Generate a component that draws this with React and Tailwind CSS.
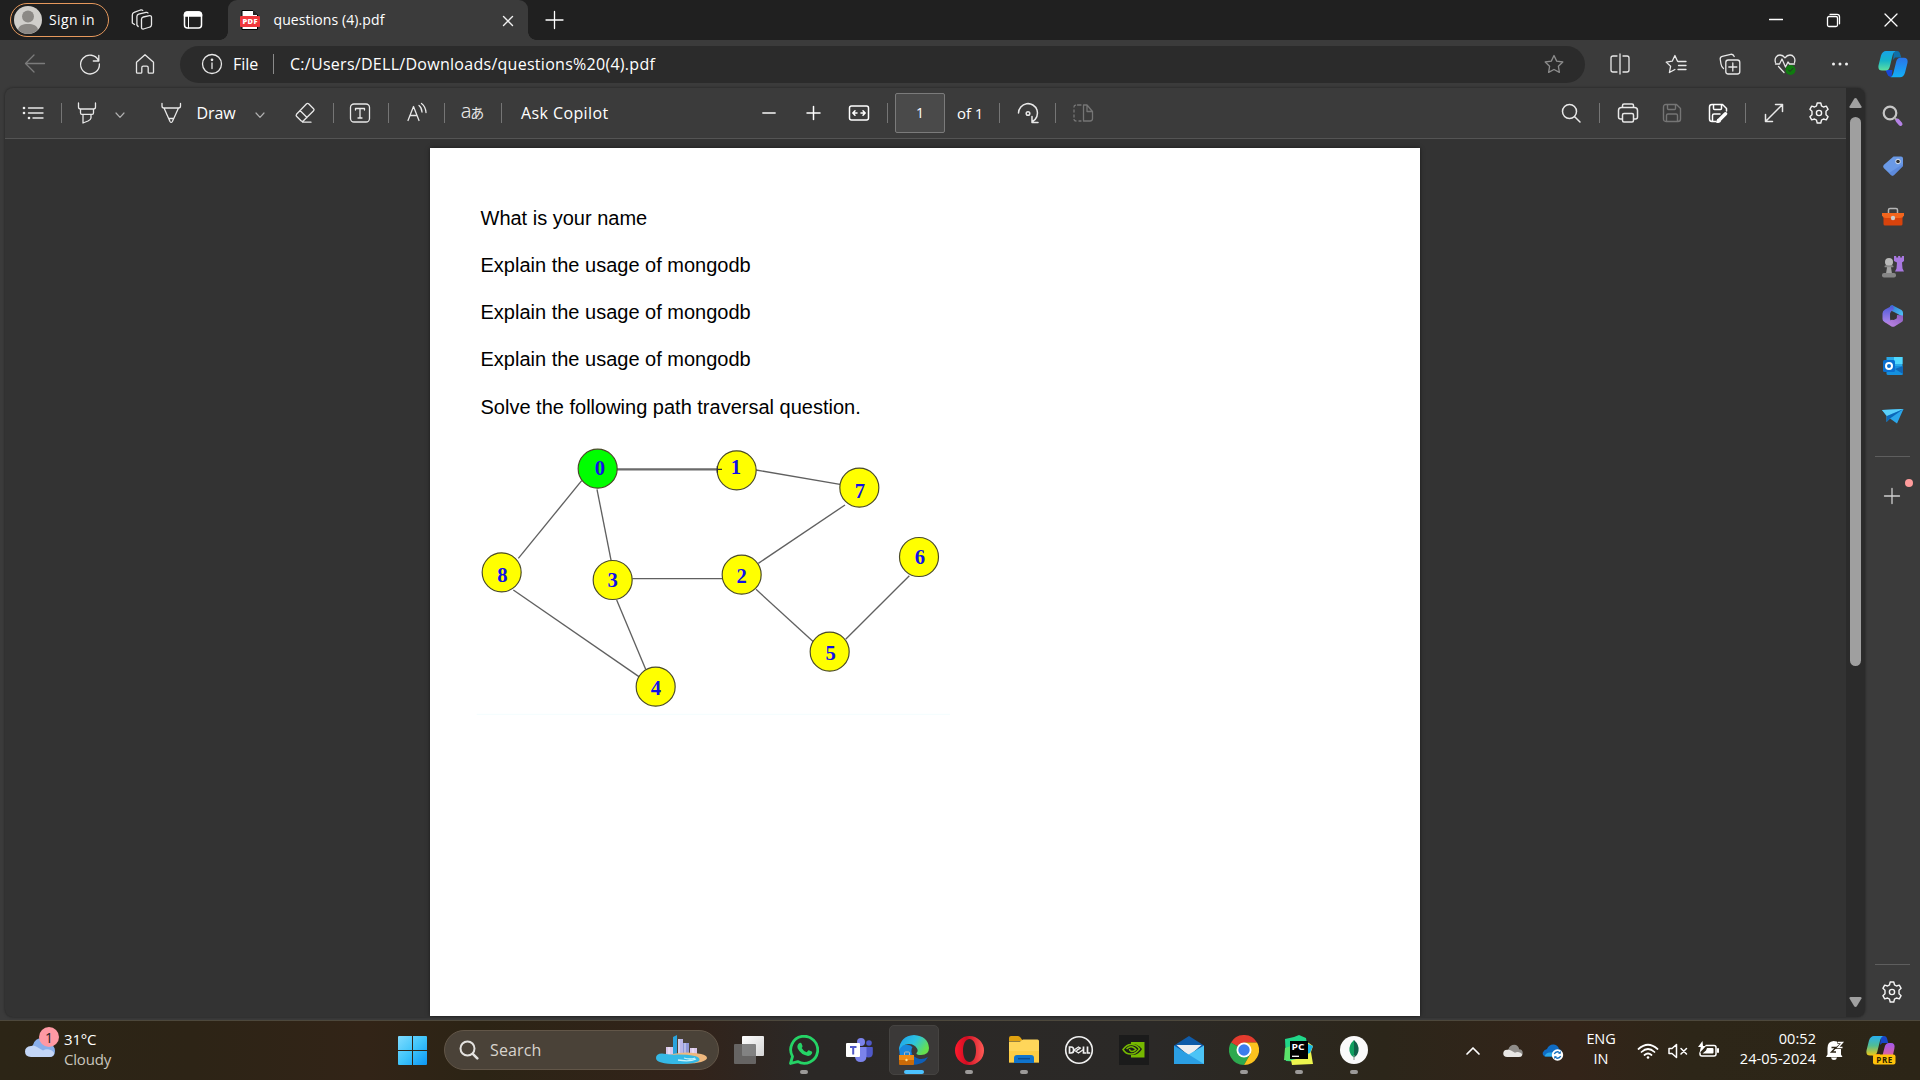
import React from "react";

const UI = "font-['Open_Sans','Noto_Sans',sans-serif]";

function I({ w = 24, h = 24, sw = 1.3, c = "#e8e8e8", children, className = "" }) {
  return (
    <svg width={w} height={h} viewBox={`0 0 ${w} ${h}`} fill="none" stroke={c} strokeWidth={sw} strokeLinecap="round" strokeLinejoin="round" className={"shrink-0 " + className}>
      {children}
    </svg>
  );
}

function Slot({ w, children, className = "" }) {
  return <div className={`flex h-full shrink-0 items-center justify-center ${w} ${className}`}>{children}</div>;
}

function Divider({ w }) {
  return (
    <Slot w={w}>
      <div className="h-5 w-px bg-[#757575]" />
    </Slot>
  );
}

const Chevron = () => (
  <I w={12} h={12} c="#b0b0b0" sw={1.2} className="mt-1"><path d="M2 4l4 4.3L10 4" /></I>
);

const GEAR = "M10.2 2h3.6l.7 2.9 1.9 1.1 2.9-.9 1.8 3.2-2.1 2v3.4l2.1 2-1.8 3.2-2.9-.9-1.9 1.1-.7 2.9h-3.6l-.7-2.9L7.600 18l-2.900.9-1.800-3.200 2.100-2v-3.400l-2.100-2 1.800-3.200 2.900.9 1.900-1.100z";
const Gear = () => (
  <I sw={1.4} c="#f5f5f5"><path d={GEAR} /><circle cx="12" cy="12" r="2.6" /></I>
);

const STAR = "M11 2.500l2.700 5.600 6.100.9-4.400 4.300 1 6.100-5.400-2.900-5.400 2.900 1-6.100L2.200 9l6.100-.9z";

function TitleBar() {
  return (
    <div className="flex h-10 shrink-0 items-center bg-[#202020] text-white">
      <div className="ml-2.5 flex h-[34px] w-[99px] items-center rounded-full border-[1.5px] border-[#e5985c] pl-[3px]">
        <svg width="28" height="28" viewBox="0 0 28 28">
          <circle cx="14" cy="14" r="14" fill="#d0cecb" />
          <circle cx="14" cy="10.500" r="6" fill="#8b8885" />
          <path d="M4 23.500c1-4 4.500-5.500 10-5.500s9 1.500 10 5.500A14 14 0 0 1 14 28 14 14 0 0 1 4 23.500z" fill="#8b8885" />
        </svg>
        <span className="ml-[7px] pb-px text-[14px] tracking-[0.4px] whitespace-nowrap">Sign in</span>
      </div>
      <Slot w="w-[65px]">
        <I w={22} h={22}>
          <path d="M10.500 10q.2-1.600 1.800-2L18.600 6.600q1.900-.2 1.900 1.600v7.600q0 1.800-1.500 2.200L12.500 20q-2 .3-2-1.600z" />
          <path d="M7.200 17.500L5.900 16V7.600q0-2 1.800-2.500L15 3.400q1.500-.2 2 .6" />
          <path d="M3.500 15.500L1.300 14V6Q1.300 4 3.100 3.400L9.500 1q1.500-.3 2.200.4" />
        </I>
      </Slot>
      <Slot w="w-[38px]">
        <I w={20} h={20} sw={1.5} c="#fff">
          <rect x="1.500" y="2" width="17" height="16" rx="3" />
          <path d="M1.500 6V4.500Q2 2 4.500 2h11q2.500 0 3 2.500V6z" fill="#fff" />
          <path d="M5.500 6v12" strokeWidth="1" />
        </I>
      </Slot>
      <div className="relative ml-4 flex h-10 w-[300px] items-center rounded-t-[9px] bg-[#3b3b3b] before:absolute before:bottom-0 before:-left-2 before:size-2 before:bg-[radial-gradient(circle_at_0_0,transparent_7.5px,#3b3b3b_8px)] after:absolute after:-right-2 after:bottom-0 after:size-2 after:bg-[radial-gradient(circle_at_100%_0,transparent_7.5px,#3b3b3b_8px)]">
        <svg width="20" height="20" viewBox="0 0 20 20" className="ml-3">
          <path d="M2 .5h11L17.500 5v14.500H2z" fill="#fff" stroke="#000" />
          <path d="M13 .5V5h4.500z" fill="#222" />
          <rect x="0" y="6" width="20" height="11" rx="1" fill="#f0383c" />
          <text x="10" y="14.300" fontSize="7.500" fontWeight="800" fill="#fff" textAnchor="middle" fontFamily="Open Sans" textLength="15">PDF</text>
        </svg>
        <span className="ml-[13.5px] pb-px text-[14px] tracking-[0.1px] whitespace-nowrap">questions (4).pdf</span>
        <Slot w="w-10" className="ml-auto">
          <I w={14} h={14} sw={1.4} c="#f0f0f0" className="mt-px"><path d="M2.500 2.500l9 9M11.500 2.500l-9 9" /></I>
        </Slot>
      </div>
      <Slot w="w-[52px]">
        <I w={20} h={20} c="#fff"><path d="M10.500 1.500v17M2 10h17" /></I>
      </Slot>
      <Slot w="w-14" className="ml-auto"><I w={14} h={14} c="#fff"><path d="M.5 6.500h13" /></I></Slot>
      <Slot w="w-[58px]">
        <I w={15} h={15} c="#fff"><rect x="1.500" y="3.500" width="10" height="10" rx="1.500" /><path d="M4 1.300h7q2.500 0 2.500 2.500v7" /></I>
      </Slot>
      <Slot w="w-[58px]"><I w={14} h={14} c="#fff"><path d="M1 1l12 12M13 1L1 13" /></I></Slot>
    </div>
  );
}

function NavBar() {
  return (
    <div className="flex h-12 shrink-0 items-center text-white">
      <Slot w="w-[70px]"><I c="#7b7b7b"><path d="M21.500 11.500H2.500M11 3L2.500 11.500 11 20" /></I></Slot>
      <Slot w="w-10">
        <I><path d="M20.500 8.500A9.400 9.400 0 1 0 21.400 12M20.800 3.500v5.500h-5.500" /></I>
      </Slot>
      <Slot w="w-[70px]">
        <I><path d="M3.500 10.200L12 2.700l8.500 7.500v10q0 1-1 1h-3.300q-1 0-1-1v-4.500q0-1.500-1.500-1.500h-3.400q-1.500 0-1.500 1.500v4.500q0 1-1 1H4.500q-1 0-1-1z" /></I>
      </Slot>
      <div className="flex h-[37px] w-[1405px] items-center rounded-full bg-[#2b2b2b]">
        <Slot w="w-6" className="ml-5">
          <I w={22} h={22}><circle cx="11" cy="11" r="9.500" /><path d="M11 10v5.500" /><circle cx="11" cy="6.800" r=".7" fill="#fff" /></I>
        </Slot>
        <span className="ml-[9px] w-10 text-[16px]">File</span>
        <div className="h-5 w-px bg-[#8a8a8a]" />
        <span className="ml-4 text-[16px] tracking-[0.28px] whitespace-nowrap">C:/Users/DELL/Downloads/questions%20(4).pdf</span>
        <Slot w="w-[62px]" className="ml-auto"><I w={22} h={22} c="#8d8d8d"><path d={STAR} /></I></Slot>
      </div>
      <Slot w="w-[69px]">
        <I w={22} h={22}><path d="M8 3H4Q2 3 2 5v12q0 2 2 2h4M14 3h4q2 0 2 2v12q0 2-2 2h-4M11 1v20" /></I>
      </Slot>
      <Slot w="w-[43px]">
        <I w={22} h={22}><path d="M12.500 8.200L9.900 2.500 7.200 8.200l-6 .9 4.400 4.200-1.200 6.200 5.500-3M13 8.500h8M13.500 12.500h7.500M13 16.500h8" /></I>
      </Slot>
      <Slot w="w-[66px]">
        <I w={22} h={22}><rect x="6.800" y="7" width="14" height="14" rx="2.500" /><path d="M13.800 10v8M9.800 14h8M4.500 15.500Q2.500 14 2 11L1.200 6q-.2-2.200 2-2.700l8.500-2q2.500-.5 3.500 2.200" /></I>
      </Slot>
      <Slot w="w-11">
        <I w={22} h={22}>
          <path d="M1.500 9.500C0 5 3 2 6 2q3 0 5 2.800Q13 2 16 2c3 0 6 3 4.500 7.500M1.500 11h4l2.500-5 3.500 8 2.500-5 1.500 2h5M4.500 13.500l5.500 6" />
          <circle cx="16.500" cy="17" r="5" fill="#0f7b0f" stroke="none" />
          <path d="M14.500 17l1.500 1.500 2.800-3" stroke="#2b2b2b" strokeWidth="1" />
        </I>
      </Slot>
      <Slot w="w-[66px]">
        <I w={18} h={6}><g fill="#f0f0f0" stroke="none"><circle cx="2.500" cy="3" r="1.500" /><circle cx="9" cy="3" r="1.500" /><circle cx="15.500" cy="3" r="1.500" /></g></I>
      </Slot>
      <Slot w="w-10">
        <svg width="30" height="28" viewBox="0 0 30 28">
          <defs>
            <linearGradient id="cpA" x1="0" y1="0" x2="0" y2="1"><stop offset="0" stopColor="#16a3e8" /><stop offset=".5" stopColor="#16b4c8" /><stop offset="1" stopColor="#5ee0a0" /></linearGradient>
            <linearGradient id="cpB" x1="0" y1="0" x2="0" y2="1"><stop offset="0" stopColor="#2a74e8" /><stop offset="1" stopColor="#12b0f8" /></linearGradient>
          </defs>
          <path d="M16 1h3q2.500 0 3.200 3l1 3.500h-6L15 10z" fill="#0e6fa8" />
          <path d="M7.500 20h7l-1 7q-3 .5-4.300-3z" fill="#1748d8" />
          <path d="M8 1h9.500q-2 1-2.800 4l-3 12q-1 3.500-4 3.500H4Q-.5 20.500.6 15L3 5.500Q4.500 1 8 1z" fill="url(#cpA)" />
          <path d="M22 27.300h-9.500q2-1 2.800-4l3-12q1-3.500 4-3.500H26q4.500 0 3.400 5.500L27 22.800q-1.500 4.500-5 4.500z" fill="url(#cpB)" />
        </svg>
      </Slot>
    </div>
  );
}

function PdfToolbar() {
  return (
    <div className="flex h-[50.5px] shrink-0 items-center border-b border-[#545454] bg-[#3b3b3b] text-[16px] text-white">
      <Slot w="w-[55px]">
        <I w={22} h={18} sw={1.4}><path d="M6.500 4H21M6.500 9H21M11 14H21" /><g fill="#eee" stroke="none"><circle cx="2" cy="4" r="1.300" /><circle cx="2" cy="9" r="1.300" /><circle cx="7" cy="14" r="1.300" /></g></I>
      </Slot>
      <Divider w="w-0.5" />
      <Slot w="w-[50px]">
        <I><path d="M3.500 2v4q0 2 2 2h13q2 0 2-2V2M5.500 8v4q0 1.300 1.300 1.300h10.400q1.300 0 1.300-1.300V8M8 13.300V22l5-2q3-1.500 3-3v-3.700" /></I>
      </Slot>
      <Slot w="w-4"><Chevron /></Slot>
      <Slot w="w-8" className="ml-[27px]">
        <I><path d="M3 2.500V5q0 2 2 2h14.500q2 0 2-2V2.500M5 7l6 13.500q1.200 1.800 2.400 0L19.500 7M9.700 17.500h5" /></I>
      </Slot>
      <span className="ml-[9.5px] w-[53.5px] tracking-[-0.1px]">Draw</span>
      <Slot w="w-5"><Chevron /></Slot>
      <Slot w="w-10" className="ml-[15px]">
        <I><path d="M13.600 2.800q1-.9 2 0l5 5q1 1 0 2L10.500 19.800q-1.500 1-2.500 0L3.500 15.300q-.8-1 0-2zM7 9.500l7 7M9.500 21.200H18" /></I>
      </Slot>
      <Divider w="w-4" />
      <Slot w="w-[38px]">
        <I w={22} h={22}><rect x="1.500" y="2" width="19" height="18" rx="3.500" /><path d="M6.500 8V6.500h9V8M11 6.500v9.500M9 16h4" /></I>
      </Slot>
      <Divider w="w-[18px]" />
      <Slot w="w-10">
        <I w={22} h={22}><path d="M2 18.500L7.500 4.500l5.500 14M4 13.500h7M13 3.500q2.700 2 3 6.500M15.500 1.500q4 3 4.500 9" /></I>
      </Slot>
      <Divider w="w-[15px]" />
      <Slot w="w-10">
        <span className="pb-1 font-['Noto_Sans','Noto_Sans_CJK_JP',sans-serif] text-[20px] leading-none font-light tracking-[-1px] text-[#e8e8e8]">a<span className="text-[14px] font-normal">あ</span></span>
      </Slot>
      <Divider w="w-[18px]" />
      <span className="ml-[11px] w-[99px] tracking-[0.4px] whitespace-nowrap">Ask Copilot</span>
      <Slot w="w-[30px]" className="ml-[134px]"><I w={16} h={6} sw={1.8} c="#c8c8c8"><path d="M2 3h12" /></I></Slot>
      <Slot w="w-[30px]" className="ml-3.5"><I w={16} h={16} sw={1.5} c="#fff"><path d="M8.500 1.500v13M2 8h13" /></I></Slot>
      <Slot w="w-10" className="ml-[11px]">
        <I w={22} h={18} sw={1.5} c="#fff"><rect x="1.500" y="2" width="19" height="14" rx="2" /><path d="M5 9h4M7 6.800L4.800 9 7 11.200M17 9h-4M15 6.800L17.200 9 15 11.200" /></I>
      </Slot>
      <Divider w="w-4" />
      <div className="flex h-10 w-[50px] items-center justify-center rounded-[2px] border border-[#7b7b7b] bg-[#4a4a4a] text-[14px]">1</div>
      <span className="ml-3 w-[27px] text-[15px] tracking-[-0.1px] whitespace-nowrap">of 1</span>
      <Divider w="w-[30px]" />
      <Slot w="w-[27px]">
        <I sw={1.5}><path d="M2.500 12A9.500 9.500 0 1 1 16.500 20.500M16 15.500v6h6" /><circle cx="12" cy="12.500" r="1.800" /></I>
      </Slot>
      <Divider w="w-[29px]" />
      <Slot w="w-[26px]">
        <I w={22} h={20} c="#757575"><path d="M9 2H5.500M3.500 2.200Q2 2.500 2 4M2 7v2M2 12v2M2 16.500q.5 1.500 2 1.500M7 18h2M11.500 2v16H18q2.500 0 2.500-2.500V8.500L15 2zM15 2v6.500h5.500" /></I>
      </Slot>
      <Slot w="w-9" className="ml-auto"><I w={22} h={22} sw={1.5}><circle cx="9.500" cy="9.500" r="7" /><path d="M14.700 14.700L20 20" /></I></Slot>
      <Divider w="w-[21px]" />
      <Slot w="w-[35px]">
        <I w={22} h={22} sw={1.5}><path d="M5.500 5V3.500q0-1.500 1.500-1.500h8q1.500 0 1.500 1.500V5M5 17H3.500Q1.500 17 1.500 15V8.500Q1.500 5.500 4.500 5.500h13q3 0 3 3V15q0 2-2 2H17" /><rect x="5.500" y="11.500" width="11" height="8.500" rx="1.500" /></I>
      </Slot>
      <Slot w="w-[34px]" className="ml-2.5">
        <I w={20} h={20} sw={1.4} c="#757575"><path d="M4 1.500h10.500l4 4V16q0 2.500-2.500 2.500H4Q1.500 18.500 1.500 16V4Q1.500 1.500 4 1.500zM5.500 1.500v4q0 1 1 1h6q1 0 1-1v-4M4.500 18.500v-6q0-1.500 1.500-1.500h8q1.500 0 1.500 1.500v6" /></I>
      </Slot>
      <Slot w="w-[34px]" className="ml-3">
        <I w={20} h={20} sw={1.5} c="#fff"><path d="M8 18.500H4Q1.500 18.500 1.500 16V4Q1.500 1.500 4 1.500h10.500l4 4V8M5.500 1.500v4q0 1 1 1h6q1 0 1-1v-4M4.500 18.500v-6q0-1.500 1.500-1.500h6" /><path d="M10.500 17.800l7-7" strokeWidth="3.500" /><path d="M9 19.500l1-3 2 2z" fill="#fff" /></I>
      </Slot>
      <Divider w="w-[21px]" />
      <Slot w="w-[35px]"><I w={20} h={20} sw={1.5}><path d="M11.500 1.500h7v7M18.500 1.500l-17 17M1.500 11.500v7h7" /></I></Slot>
      <Slot w="w-[55px]"><Gear /></Slot>
    </div>
  );
}

const NODES = [
  [413, 116, "0", 420, 136], [830, 121, "1", 828, 132], [1198, 173, "7", 1200, 205],
  [125, 427, "8", 127, 456], [458, 450, "3", 458, 470], [845, 434, "2", 845, 460],
  [1377, 381, "6", 1380, 401], [1109, 665, "5", 1112, 689], [587, 770, "4", 588, 794],
];
const EDGES = [
  [888, 120, 1140, 163], [365, 152, 175, 385], [411, 178, 455, 400], [517, 446, 787, 446],
  [895, 400, 1155, 225], [888, 478, 1065, 640], [1157, 628, 1348, 437], [160, 480, 540, 742], [470, 510, 557, 718],
];

function Graph() {
  return (
    <svg width="500" height="290" viewBox="0 0 1500 870" className="-mt-px ml-[30px] shrink-0">
      <path d="M50 853H1470" stroke="#f3fdfe" strokeWidth="3" />
      <path d="M470 118H785" stroke="#6a6a6a" strokeWidth="7" />
      {EDGES.map(([a, b, c, d]) => <line key={`${a}-${b}`} x1={a} y1={b} x2={c} y2={d} stroke="#606060" strokeWidth="4" />)}
      {NODES.map(([x, y, t, tx, ty]) => (
        <g key={t}>
          <circle cx={x} cy={y} r="58.500" fill={t === "0" ? "#00ff00" : "#ffff00"} stroke="#4a4a28" strokeWidth="3.500" />
          <text x={tx} y={ty} fontSize="62" fontWeight="700" fontFamily="Liberation Serif" fill="#1010e8" textAnchor="middle">{t}</text>
        </g>
      ))}
      <path d="M772 108v20M772 118h14" stroke="#333" strokeWidth="4" />
    </svg>
  );
}

function PdfView() {
  return (
    <div className="ml-[5px] flex h-[929px] w-[1860px] overflow-hidden rounded-lg bg-[#333] shadow-[0_0_3px_rgba(0,0,0,.45)]">
      <div className="flex w-[1841px] flex-col">
        <PdfToolbar />
        <div className="mt-[9.5px] ml-[425px] flex min-h-0 w-[990px] flex-1 flex-col overflow-hidden bg-white pt-[47px] font-['Liberation_Sans',sans-serif] text-[20px] leading-[47px] text-black shadow-[0_0_4px_rgba(0,0,0,.5)] mb-px">
          <p className="ml-[50.5px]">What is your name</p>
          <p className="ml-[50.5px]">Explain the usage of mongodb</p>
          <p className="ml-[50.5px]">Explain the usage of mongodb</p>
          <p className="ml-[50.5px]">Explain the usage of mongodb</p>
          <p className="ml-[50.5px] pt-px">Solve the following path traversal question.</p>
          <Graph />
        </div>
      </div>
      <div className="flex w-[19px] flex-col items-center bg-[#2b2b2b]">
        <svg width="13" height="10" viewBox="0 0 13 10" className="mt-2.5"><path d="M6.500 0q.8 0 1.300.8l4.700 7.700q.5 1.500-1 1.500h-10Q0 10 .5 8.500L5.200.8Q5.700 0 6.500 0z" fill="#a0a0a0" /></svg>
        <div className="mt-[9px] h-[549px] w-[11px] rounded-full bg-[#9f9f9f]" />
        <svg width="13" height="10" viewBox="0 0 13 10" className="mt-auto mb-2.5"><path d="M6.500 10q-.8 0-1.300-.8L.5 1.500Q0 0 1.500 0h10q1.500 0 1 1.500L7.800 9.200q-.5.8-1.300.8z" fill="#a0a0a0" /></svg>
      </div>
    </div>
  );
}

function Sidebar() {
  return (
    <div className="flex w-[55px] flex-col items-center pt-[3px]">
      <Slot w="w-full" className="max-h-[50px] min-h-[50px]">
        <svg width="22" height="22" viewBox="0 0 22 22"><circle cx="8" cy="8" r="6.300" fill="none" stroke="#c6c6c6" strokeWidth="2.200" /><path d="M12.500 12.700l2.500 2.500" stroke="#aaa" strokeWidth="2" /><path d="M15.500 15.500l3 3.500" stroke="#b582e6" strokeWidth="4" strokeLinecap="round" /></svg>
      </Slot>
      <Slot w="w-full" className="max-h-[50px] min-h-[50px]">
        <svg width="22" height="22" viewBox="0 0 22 22"><path d="M11.500 1.500h7.500q2 0 2 2V11l-9 9q-1.500 1.500-3 0L1.700 13q-1.200-1.500 0-3z" fill="#6a99e6" /><path d="M21 9v2l-9 9q-1.500 1.500-3 0l-2-2z" fill="#5580d6" opacity=".6" /><circle cx="16" cy="6.500" r="2.300" fill="#333" stroke="#dde6f4" /></svg>
      </Slot>
      <Slot w="w-full" className="max-h-[50px] min-h-[50px]">
        <svg width="22" height="20" viewBox="0 0 22 20" className="mt-0.5"><path d="M6.500 6V3q0-1.500 1.500-1.500h6q1.500 0 1.500 1.500v3" fill="none" stroke="#b5b5b5" strokeWidth="1.500" /><path d="M1.500 9h19v8q0 1.500-1.500 1.500H3q-1.500 0-1.500-1.500z" fill="#d8430c" /><path d="M0 6h22v2.500Q21 11 18 11H4Q1 11 0 8.500z" fill="#f2651d" /><circle cx="11" cy="11" r="2.200" fill="#ccc" /></svg>
      </Slot>
      <Slot w="w-full" className="max-h-[50px] min-h-[50px]">
        <svg width="22" height="23" viewBox="0 0 22 23"><path d="M12 1h2.200v1.500h1.900V1h2.100v1.500h1.700V1H22v5l-2 1.500.5 6 1.500 3h-9l1.500-3 .5-6-3-1.500z" fill="#a878e0" /><circle cx="7" cy="7" r="4" fill="#b9b9b9" /><path d="M3.500 10.500h7l-1.500 2 1 6H4l1-6z" fill="#a3a3a3" /><rect x="0" y="18" width="14" height="4.500" rx="2" fill="#858585" /><rect x="2.500" y="10.500" width="9" height="1.800" rx=".9" fill="#8a8a8a" /></svg>
      </Slot>
      <Slot w="w-full" className="max-h-[50px] min-h-[50px]">
        <svg width="22" height="22" viewBox="0 0 22 22">
          <defs>
            <linearGradient id="mA" x1="0" y1="0" x2="1" y2="1"><stop offset="0" stopColor="#2a78d0" /><stop offset="1" stopColor="#52c8f8" /></linearGradient>
            <linearGradient id="mB" x1="0" y1="0" x2="0" y2="1"><stop offset="0" stopColor="#4a58d8" /><stop offset="1" stopColor="#a884ea" /></linearGradient>
            <linearGradient id="mC" x1="0" y1="1" x2="1" y2="0"><stop offset="0" stopColor="#c28ae8" /><stop offset="1" stopColor="#8a5cc0" /></linearGradient>
          </defs>
          <path d="M10 0l9.500 5q1.500 1 1.500 3v4l-6-3.500L8 5V1z" fill="url(#mA)" />
          <path d="M21 10.500V15q0 1.300-1.300 2L12.500 21.500q-1.500.7-3 0L2.500 17l6.500-2 5-1 1-4z" fill="url(#mC)" />
          <path d="M11 .3L3 4.500Q.5 6 .5 8.500V14q0 2 2 3 3 1 5.700-1V8.500Q8.200 7 9.500 6L12 4.500z" fill="url(#mB)" />
          <path d="M8.200 8.500L11 7l3.800 2.500v3.800L11.500 15l-3.300-1.500z" fill="#353535" />
        </svg>
      </Slot>
      <Slot w="w-full" className="max-h-[50px] min-h-[50px]">
        <svg width="22" height="20" viewBox="0 0 22 20"><path d="M4.500 1h16v10h-16z" fill="#28a8e8" /><path d="M12 1h8.500v7H12z" fill="#50d9ff" /><path d="M4.500 10H21v7.500q0 1.500-1.500 1.500H6q-1.500 0-1.500-1.500z" fill="#1490df" /><path d="M21 10v8L13 13z" fill="#1066b5" /><rect x="1" y="4" width="12" height="12" rx="1.500" fill="#0a6fd0" /><circle cx="7" cy="10" r="3" fill="none" stroke="#fff" strokeWidth="2" /></svg>
      </Slot>
      <Slot w="w-full" className="max-h-[50px] min-h-[50px]">
        <svg width="22" height="16" viewBox="0 0 22 16"><path d="M0 2L21.500 1 15 15.500 8 10.500 4.500 14V8z" fill="#2ba6ea" /><path d="M0 2L21.500 1 5 8z" fill="#5ad0fa" /><path d="M5 8L21 1.200 8 10.500 4.500 14z" fill="#0c67b8" /></svg>
      </Slot>
      <div className="mt-[15px] h-px w-[35px] shrink-0 bg-[#5e5e5e]" />
      <div className="relative mt-[30px] mr-0.5">
        <I w={18} h={18} c="#d0d0d0"><path d="M9 1.500v15M1.500 9h15" /></I>
        <div className="absolute -top-2 -right-3 size-2 rounded-full bg-[#ff9c9c]" />
      </div>
      <div className="mt-auto h-px w-[35px] shrink-0 bg-[#5e5e5e]" />
      <div className="mt-[15.5px] mb-4 mr-px"><Gear /></div>
    </div>
  );
}

function App55({ children, active, run }) {
  return (
    <div className="relative flex h-full w-[55px] items-center justify-center">
      <div className={`-mt-px flex size-[50px] items-center justify-center rounded-[5px] ${active ? "border border-[#454341] bg-[#3b3938]" : ""}`}>{children}</div>
      {run && <div className="absolute bottom-1.5 h-1 w-2 rounded-full bg-[#9c9a99]" />}
      {active && <div className="absolute bottom-1.5 h-1 w-5 rounded-full bg-[#4cc2ff]" />}
    </div>
  );
}

function CloudIcon({ w, h, a, b }) {
  return (
    <svg width={w} height={h} viewBox="0 0 30 20">
      <path d="M10 20Q4 18 5 11 8 8 8 8 10 1 17 1q6 0 7.500 7Q30 8 30 14q0 6-6 6z" fill={a} />
      <path d="M6 20q-6-.5-6-5.500T6 9q3-1 6 1l6 3.500q3-2 6-1 5.500 1.500 5 4.500-.5 3-5 3z" fill={b} />
    </svg>
  );
}

function Taskbar() {
  return (
    <div className="flex h-[60px] shrink-0 items-center border-t border-[#4d483c] bg-[linear-gradient(90deg,#2c2516_0%,#2d2416_10%,#322417_19%,#2c2415_25%,#32231a_36%,#2b2826_42%,#2b2927_60%,#2c261a_72%,#332419_82%,#2d2618_88%,#2c2517_100%)] text-white">
      <div className="relative ml-[25px] h-5 w-[30px] self-start mt-4">
        <CloudIcon w={30} h={20} a="#89aeea" b="#c3d6f7" />
        <div className="absolute -top-2.5 left-3.5 flex size-5 items-center justify-center rounded-full bg-[#ff99a4] text-[14px] text-[#222]">1</div>
      </div>
      <div className="mb-[3px] ml-[9px] w-[334px] text-[15px] leading-5 tracking-[-0.2px]"><div>31°C</div><div className="text-[#c9c5bd]">Cloudy</div></div>
      <svg width="29" height="29" viewBox="0 0 29 29" className="-mt-px">
        <defs><linearGradient id="win" x1="0" y1="0" x2="1" y2="1"><stop offset="0" stopColor="#80dcff" /><stop offset=".5" stopColor="#3fc4fa" /><stop offset="1" stopColor="#0c96f4" /></linearGradient></defs>
        <path d="M0 1q0-1 1-1h13v14H0zM15 0h13q1 0 1 1v13H15zM0 15h14v14H1q-1 0-1-1zM15 15h14v13q0 1-1 1H15z" fill="url(#win)" />
      </svg>
      <div className="-mt-px ml-[17px] flex h-10 w-[275px] items-center rounded-full border border-[#625648] bg-[#4a4238]">
        <I w={20} h={20} sw={2} c="#e4e2df" className="ml-3.5"><circle cx="8.500" cy="8.500" r="7" /><path d="M13.800 13.800l4.500 4.500" strokeWidth="2.600" /></I>
        <span className="ml-[11px] text-[16px] tracking-[0.15px] text-[#d8d4ce]">Search</span>
        <svg width="52" height="32" viewBox="0 0 52 32" className="mr-2.5 ml-auto">
          <path d="M10 13h7v10h-7zM34 14h7v9h-7z" fill="#d9c7ea" />
          <path d="M17 3l4-2v22h-4z" fill="#2aa3dc" /><path d="M22 5h5v18h-5z" fill="#b9b5e6" /><path d="M27 9h6v14h-6z" fill="#8f97d8" />
          <path d="M23 5v18M29 9v14M37 14v9M13 13v9" stroke="#fff" strokeWidth="1" opacity=".7" />
          <ellipse cx="31" cy="24" rx="20" ry="5.500" fill="#eeb87e" />
          <path d="M0 24q0-4.500 6-4.500 8 1.500 16 1 20 0 21.500 4.500 1 5-22 5Q0 30 0 24z" fill="#35b9e6" />
          <path d="M22 26q12 2 18-1M28 24q6 2 11 0" stroke="#c8f3fb" strokeWidth="1.300" fill="none" />
        </svg>
      </div>
      <div className="ml-[2.5px] flex h-full">
        <App55>
          <svg width="30" height="28" viewBox="0 0 30 28"><defs><linearGradient id="tv" x1="0" y1="0" x2="1" y2="1"><stop offset="0" stopColor="#fff" /><stop offset="1" stopColor="#d4d4d4" /></linearGradient></defs><rect x="8" y="0" width="22" height="20" rx="1" fill="url(#tv)" /><rect x="0" y="8" width="22" height="20" rx="1" fill="#707070" opacity=".85" /></svg>
        </App55>
        <App55 run>
          <svg width="30" height="30" viewBox="0 0 30 30"><path d="M1.500 28.500l2-7A13.500 13.500 0 1 1 8.700 26.600z" fill="none" stroke="#25d366" strokeWidth="2.800" strokeLinejoin="round" /><path d="M10.500 8q1.500-.7 2 .5l1 2.500q.2.800-.8 2 1.500 3 5 4.300l1.500-1.700q.5-.5 1.200-.2l2.400 1.200q.7.400.2 1.900-1 2.500-4 2.400Q12 20 8.700 13.500 7.500 10 10.500 8z" fill="#25d366" /></svg>
        </App55>
        <App55>
          <svg width="27" height="24" viewBox="0 0 27 24"><circle cx="15" cy="4" r="4" fill="#7b83eb" /><circle cx="23" cy="5" r="2.800" fill="#5059c9" /><path d="M18 9h8q.8 0 .8.800V15q0 4.500-4.500 4.500-3 0-4.300-2z" fill="#5059c9" /><path d="M9 9h11.500v9q0 6-6 6-5 0-5.500-5z" fill="#7b83eb" /><rect x="0" y="5" width="14" height="14" rx="1" fill="#fff" /><path d="M4 9h6.500M7.200 9v7.500" stroke="#5059c9" strokeWidth="2" /></svg>
        </App55>
        <App55 active>
          <svg width="30" height="30" viewBox="0 0 30 30">
            <defs><linearGradient id="edg" x1="0" y1="0" x2="1" y2=".5"><stop offset="0" stopColor="#1c9ff0" /><stop offset=".55" stopColor="#2dc3de" /><stop offset="1" stopColor="#66e04e" /></linearGradient></defs>
            <path d="M12 10.500Q4 9 .5 18 0 24 5 28.500q8 3 18-.5 4-2 6-6-5 3-10 1.500-6-2-6.500-7z" fill="#0e5fb8" />
            <path d="M.500 17Q-1 11 2 11 8 8 13.500 12q-2 3-1 7-5 3-8 7-3.500-3-4-9z" fill="#1988dd" />
            <path d="M0 15Q1 1 15 0q14 1 15 13 0 7-8 7-5 0-4.500-2 2-2 .5-4.500Q15.500 9 10 9 3 9 0 15z" fill="url(#edg)" />
            <path d="M5.500 20v-2q0-1 1-1h3q1 0 1 1v2" fill="none" stroke="#b5b5b5" />
            <rect x="0" y="20" width="15" height="10" rx="1" fill="#c96a08" /><rect x="0" y="20" width="15" height="5" fill="#ee8a14" /><circle cx="7.500" cy="25" r="1.200" fill="#ffe090" />
          </svg>
        </App55>
        <App55 run>
          <svg width="29" height="29" viewBox="0 0 29 29"><defs><linearGradient id="op" x1="0" y1="0" x2="1" y2="0"><stop offset="0" stopColor="#ff1b2d" /><stop offset=".4" stopColor="#d00d22" /><stop offset="1" stopColor="#ff5a55" /></linearGradient></defs><path fillRule="evenodd" d="M14.500 0a14.500 14.500 0 1 0 0 29 14.500 14.500 0 1 0 0-29zM14.500 3c4 0 6.500 5 6.500 11.500S18.500 26 14.500 26 8 21 8 14.500 10.500 3 14.500 3z" fill="url(#op)" /></svg>
        </App55>
        <App55 run>
          <svg width="30" height="28" viewBox="0 0 30 28"><path d="M0 2q0-2 2-2h7q1.500 0 2.500 1.500L14 5H0z" fill="#e0a210" /><path d="M0 5.500h11L14 3.500h14.500Q30 3.500 30 5v21.500H0z" fill="#ffd65a" /><path d="M0 15h30v11.500H0z" fill="#fbc637" opacity=".6" /><path d="M5 22q0-3 3-3h14q3 0 3 3v5H5z" fill="#1074cc" /><path d="M9 22.700h12" stroke="#0a4c92" strokeWidth="1.500" /></svg>
        </App55>
        <App55>
          <svg width="30" height="30" viewBox="0 0 30 30"><circle cx="15" cy="15" r="13.300" fill="none" stroke="#f0f0f0" strokeWidth="1.600" /><g fill="none" stroke="#f0f0f0" strokeWidth="1.700"><path d="M5.500 12v6h1.600q2.600 0 2.600-3t-2.600-3zM19.500 11.500V18h2.700M23.500 11.500V18h2.700" /><path d="M10 15l4.500-3 1.500 1-3.500 2.500M10 15l4.500 3 5-3.500M12.500 15.800l4.500-3" strokeWidth="1.200" /></g></svg>
        </App55>
        <App55>
          <svg width="30" height="30" viewBox="0 0 30 30"><rect width="30" height="30" fill="#1b1b1b" /><path d="M12 7h13.500v15.500H12z" fill="#76b900" /><path d="M3.500 14.500Q9 8 17 9.500q4 1.500 6 4.500-3 5.500-9 6-7 .5-10.500-5.500z" fill="#1b1b1b" /><g fill="none" stroke="#76b900" strokeWidth="1.500"><path d="M4 14.500Q8 9 13 9.500q5 .5 7.500 4.500-4 5-8 5Q7 19.500 4 14.500z" /><path d="M7.500 14q3-3 6-2 2.500 1 3.500 2.500-2.500 2.500-5 1.800-1.500-.8-1.500-2.300" /></g></svg>
        </App55>
        <App55>
          <svg width="30" height="28" viewBox="0 0 30 28"><path d="M0 9.500L15 0l15 9.500v5H0z" fill="#0f5ba8" /><path d="M2.500 9h25L15 20z" fill="#eeeef0" /><path d="M30 9.500L12 20l-3 8h21z" fill="#4cc4f6" /><path d="M0 9.500L30 28H0z" fill="#2b9fe4" /></svg>
        </App55>
        <App55 run>
          <svg width="30" height="30" viewBox="0 0 30 30"><path d="M15 15L2 7.500A15 15 0 0 1 28 7.500L15 7.500z" fill="#e33b2e" /><path d="M2 7.500A15 15 0 0 0 15 30l6.500-11.300L15 15z" fill="#2da94f" /><path d="M28 7.500A15 15 0 0 1 15 30l6.500-11.300L15 7.500z" fill="#fcc31e" /><circle cx="15" cy="15" r="7.500" fill="#fff" /><circle cx="15" cy="15" r="5.700" fill="#3b7ded" /></svg>
        </App55>
        <App55 run>
          <svg width="30" height="30" viewBox="0 0 30 30"><path d="M1 4l9-2 5-2 7 3 1 6-5 18-16-1z" fill="#21d789" /><path d="M22 6l7 5-2 6 2 12-21 1-1-5 16-3z" fill="#ecf44e" /><path d="M22 8l7 3-3 7-3 1z" fill="#17b8e8" /><path d="M1 13l6-2v15l-7-1z" fill="#5be36a" /><rect x="6" y="6" width="18" height="18" fill="#000" /><text x="7.500" y="14.800" fontSize="9.500" fontWeight="700" fill="#fff" fontFamily="Open Sans" textLength="13" lengthAdjust="spacingAndGlyphs">PC</text><path d="M8 21.300h7" stroke="#fff" strokeWidth="1.300" /></svg>
        </App55>
        <App55 run>
          <svg width="30" height="30" viewBox="0 0 30 30"><circle cx="15" cy="15" r="14" fill="#fafafa" /><path d="M15 5q-5.500 5-4.500 11 1 4.500 4.500 6.500z" fill="#10a060" /><path d="M15 5q5.500 5 4.500 11-1 4.500-4.500 6.500z" fill="#116149" /><path d="M15 20v5" stroke="#8a9a90" /></svg>
        </App55>
      </div>
      <Slot w="w-10" className="ml-auto"><I w={16} h={12} sw={1.700} c="#fff"><path d="M2 9l6-6 6 6" /></I></Slot>
      <Slot w="w-10"><CloudIcon w={20} h={13} a="#8f8c89" b="#e8e6e4" /></Slot>
      <Slot w="w-10">
        <svg width="22" height="18" viewBox="0 0 22 18" className="mt-0.5"><path d="M4 13.500Q0 13 .8 9.500 2 6.500 5 6 7 1 12 1.500q4 .5 5 4.500 3 .5 3 4 0 3.500-4 3.500z" fill="#0f6cc4" /><path d="M2.500 13.500Q4 9 9 9.500h6v4z" fill="#29a7ea" /><circle cx="15.500" cy="12" r="5.700" fill="#fff" /><path d="M12.300 11q1-2.500 4-2.200l1.500 1.200M18.700 13q-1 2.500-4 2.200L13.200 14" stroke="#0f6cbd" strokeWidth="1.300" fill="none" /><path d="M18.800 8v2.800H16zM12.200 16v-2.800H15z" fill="#0f6cbd" /></svg>
      </Slot>
      <div className="mb-[3px] w-14 text-center text-[14.5px] leading-5 tracking-[-0.1px]">ENG<br />IN</div>
      <Slot w="w-[38px]">
        <I w={22} h={18} sw={1.700} c="#fff"><path d="M1.500 7q9.500-8.500 19 0M4.500 10q6.500-6 13 0M7.500 13q3.500-3 7 0" /><circle cx="11" cy="15.500" r="1.300" fill="#fff" stroke="none" /></I>
      </Slot>
      <Slot w="w-[22px]">
        <I w={20} h={16} sw={1.500} c="#fff"><path d="M1 5.500h3l4.500-4v13l-4.500-4H1zM13 5.500l5.500 5.500M18.500 5.500L13 11" /></I>
      </Slot>
      <Slot w="w-[38px]">
        <I w={22} h={18} sw={1.500} c="#fff" className="mb-0.5"><path d="M9 4.500h8q2 0 2 2V13q0 2-2 2H5q-2 0-2-2v-1" /><path d="M10 7h5.500q1 0 1 1v3.500q0 1-1 1h-10L9 9.500z" fill="#fff" stroke="none" /><path d="M21 8v3" strokeWidth="2" /><path d="M5.500 0L1 6h2.800L2.500 12 9 5H6z" fill="#fff" stroke="none" /></I>
      </Slot>
      <div className="mb-[3px] w-[89px] text-right text-[14.5px] leading-5 tracking-[0.05px]">00:52<br />24-05-2024</div>
      <Slot w="w-[38px]">
        <svg width="20" height="22" viewBox="0 0 20 22" className="mb-0.5"><path d="M2.500 15.500V9q0-6.500 6-7 7.500 0 7.500 7v6.500l1.500 2.500H1z" fill="#fff" /><path d="M6 18.500h6q-.5 2.500-3 2.500t-3-2.500z" fill="#fff" /><path d="M6.500 8.500h4.500L6.500 13h4.500" stroke="#2c2517" strokeWidth="1.400" fill="none" /><path d="M12.500 3.500h5.500l-5 5h5" stroke="#2c2517" strokeWidth="3" fill="none" /><path d="M13 3.500h4.500l-4.500 5h4.500" stroke="#fff" strokeWidth="1.400" fill="none" /></svg>
      </Slot>
      <Slot w="w-[52px]" className="mr-3.5">
        <svg width="30" height="30" viewBox="0 0 30 30" className="-mt-px ml-0.5">
          <defs>
            <linearGradient id="pA" x1="0" y1="0" x2="0" y2="1"><stop offset="0" stopColor="#28b0f0" /><stop offset=".5" stopColor="#52bd92" /><stop offset="1" stopColor="#f0c813" /></linearGradient>
            <linearGradient id="pB" x1="0" y1="0" x2="0" y2="1"><stop offset="0" stopColor="#a358ee" /><stop offset="1" stopColor="#fa6678" /></linearGradient>
          </defs>
          <path d="M15 1h3q2.500 0 3.200 3l1 4h-6L14 10z" fill="#1747c8" />
          <path d="M6 19h8l-1 7q-3 .5-5-3z" fill="#f0632f" />
          <path d="M8 1h9q-2 1-2.800 4l-3 12q-1 3.500-4 3.500H4Q-.5 20.500.6 15L3 5.500Q4.500 1 8 1z" fill="url(#pA)" />
          <path d="M22 27h-9q2-1 2.800-4l3-11.500q1-3.500 4-3.500H25q4.500 0 3.400 5.500L26.500 22q-1.500 5-4.500 5z" fill="url(#pB)" />
          <rect x="7" y="19.500" width="22.500" height="10" rx="2" fill="#ffc20a" />
          <text x="18.300" y="27.500" fontSize="8" fontWeight="700" textAnchor="middle" fill="#2a2000" fontFamily="Open Sans" textLength="16">PRE</text>
        </svg>
      </Slot>
    </div>
  );
}

export default function App() {
  return (
    <div className={`flex h-[1080px] w-[1920px] flex-col overflow-hidden bg-[#3b3b3b] ${UI}`}>
      <TitleBar />
      <NavBar />
      <div className="flex h-[932px] shrink-0">
        <PdfView />
        <Sidebar />
      </div>
      <Taskbar />
    </div>
  );
}
